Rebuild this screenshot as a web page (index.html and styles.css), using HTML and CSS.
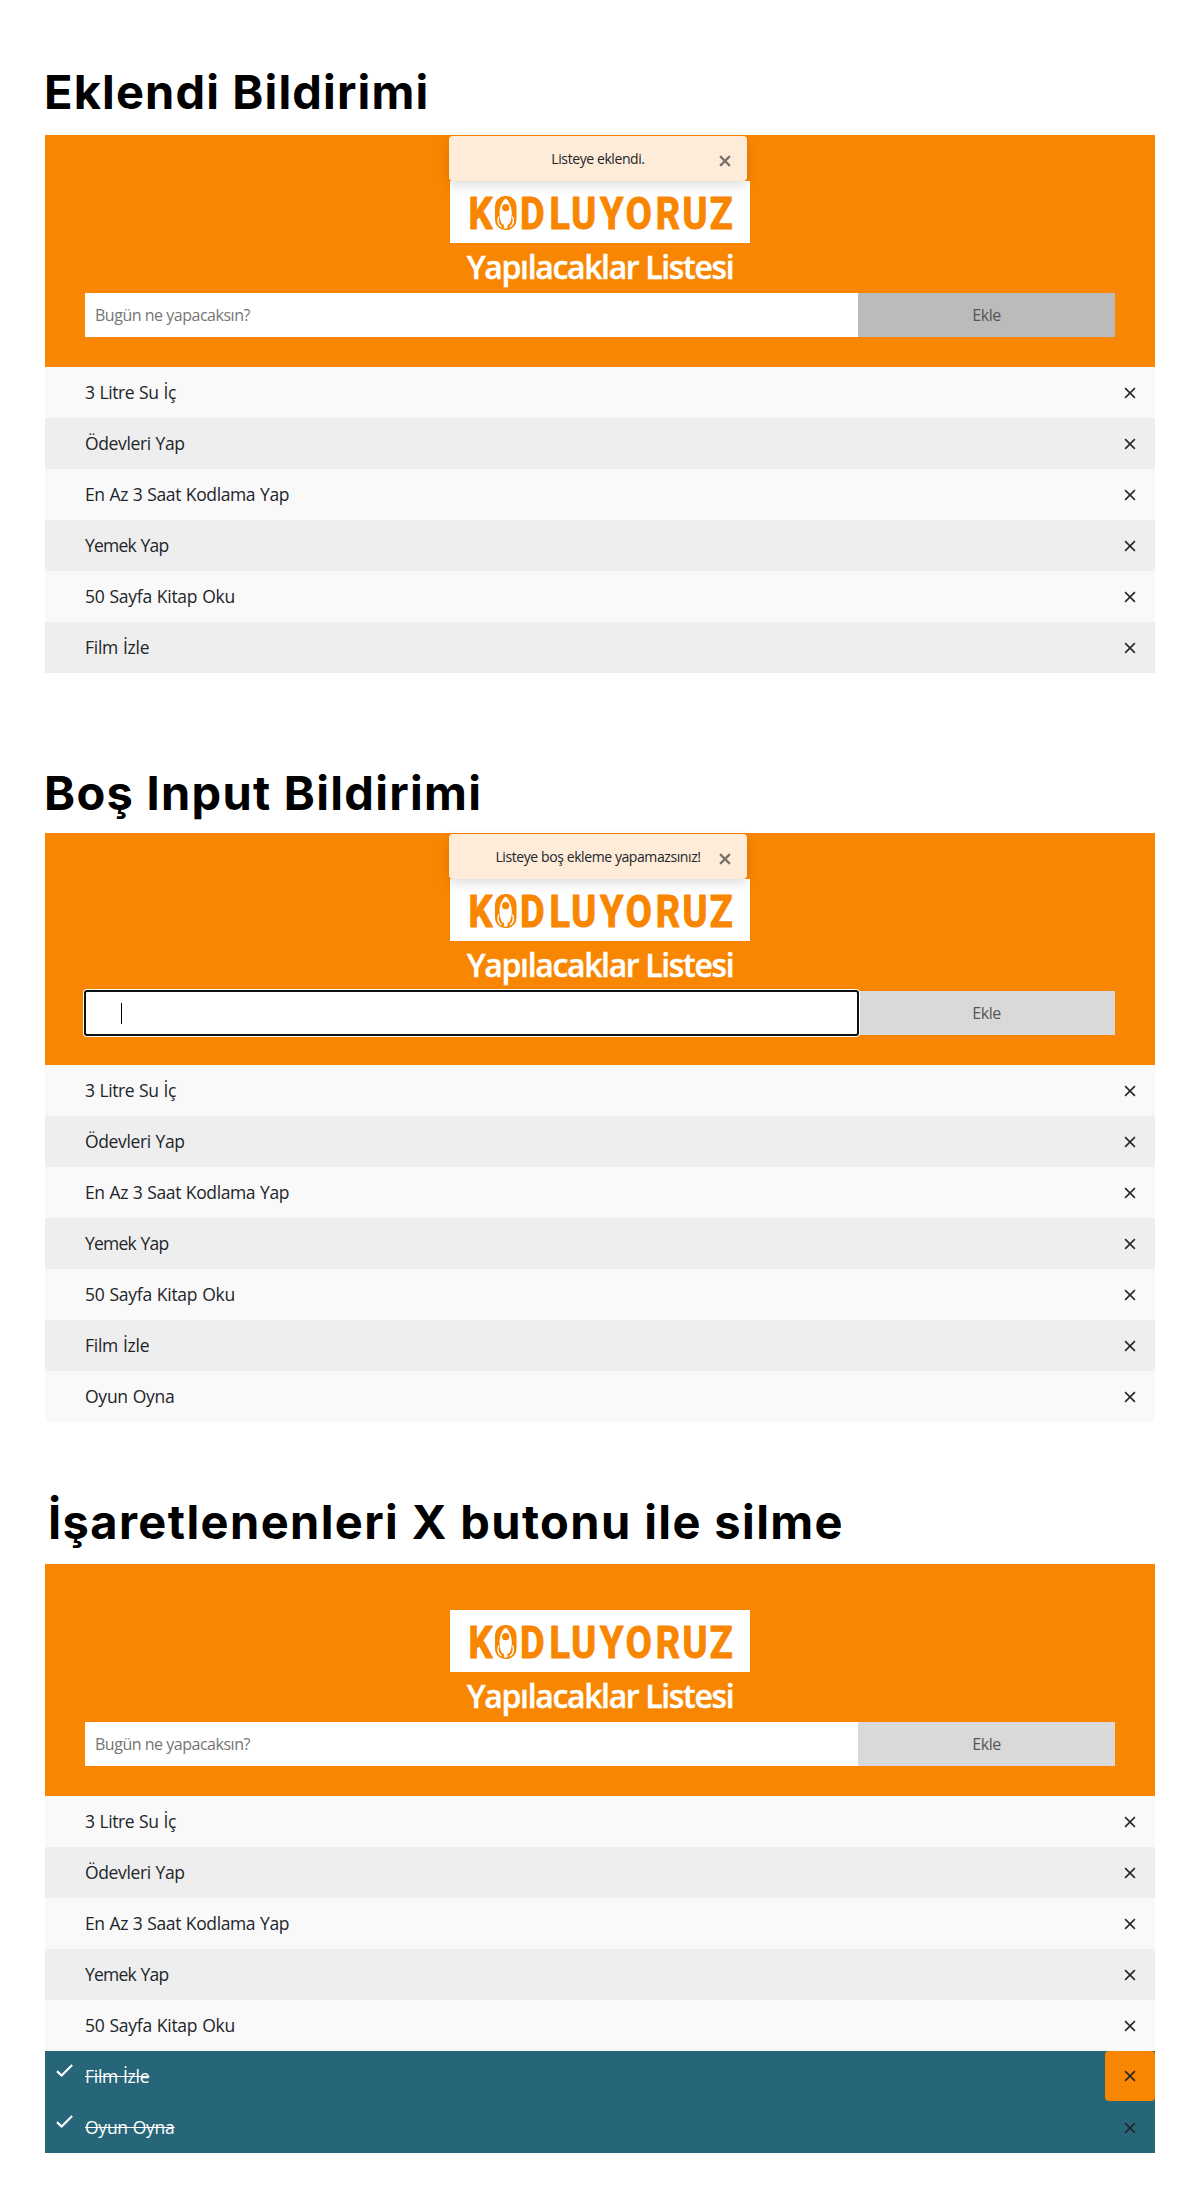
FILE: index.html
```
<!DOCTYPE html>
<html lang="tr">
<head>
<meta charset="utf-8">
<title>Yapılacaklar Listesi</title>
<link rel="stylesheet" href="styles.css">
</head>
<body>
<svg width="0" height="0" class="defs" aria-hidden="true">
  <symbol id="cross" viewBox="0 0 12 12"><path d="M1.1 1.1 10.9 10.9M10.9 1.1 1.1 10.9"/></symbol>
  <symbol id="check" viewBox="0 0 16 12"><path d="M.9 6.6 5.3 10.7 15.2 .9"/></symbol>
  <symbol id="rocket" viewBox="0 0 300 62">
    <rect x="45" y="15" width="21.5" height="34" rx="10" fill="#f98600"/>
    <path d="M55.7 17.6C51.5 20.8 49.4 27 49.6 33c.1 4 .9 7.6 2.6 10.5h1.7v4h3.6v-4h1.7c1.7-2.9 2.5-6.5 2.6-10.5C62 27 59.9 20.8 55.7 17.6z" fill="#fff"/>
    <circle cx="55.7" cy="26.7" r="3.6" fill="#f98600"/>
    <path d="M49 35.5c-2 4.5-.8 8 2.4 10.5M62.4 35.5c2 4.5.8 8-2.4 10.5" fill="none" stroke="#fff" stroke-width="1.3"/>
  </symbol>
</svg>

<main class="page">
  <section class="demo">
    <h2 class="heading">Eklendi Bildirimi</h2>
    <div class="panel">
      <header class="top">
        <div class="toast"><span>Listeye eklendi.</span><svg class="toast-x"><use href="#cross"/></svg></div>
        <svg class="logo" viewBox="0 0 300 62"><text class="logo-text" transform="scale(.84 1)" y="48" x="36.4 98 130.6 159.2 192.6 224.8 259.5 291.5 323">KDLUYORUZ</text><use href="#rocket"/></svg>
        <h1 class="title">Yapılacaklar Listesi</h1>
        <div class="form"><div class="field">Bugün ne yapacaksın?</div><div class="add add-hover">Ekle</div></div>
      </header>
      <ul class="list">
        <li class="item"><span class="snug">3 Litre Su İç</span><b class="del"><svg><use href="#cross"/></svg></b></li>
        <li class="item"><span class="snug">Ödevleri Yap</span><b class="del"><svg><use href="#cross"/></svg></b></li>
        <li class="item"><span class="snug">En Az 3 Saat Kodlama Yap</span><b class="del"><svg><use href="#cross"/></svg></b></li>
        <li class="item"><span class="tight">Yemek Yap</span><b class="del"><svg><use href="#cross"/></svg></b></li>
        <li class="item"><span>50 Sayfa Kitap Oku</span><b class="del"><svg><use href="#cross"/></svg></b></li>
        <li class="item"><span>Film İzle</span><b class="del"><svg><use href="#cross"/></svg></b></li>
      </ul>
    </div>
  </section>

  <section class="demo demo-empty">
    <h2 class="heading">Boş Input Bildirimi</h2>
    <div class="panel">
      <header class="top">
        <div class="toast"><span>Listeye boş ekleme yapamazsınız!</span><svg class="toast-x"><use href="#cross"/></svg></div>
        <svg class="logo" viewBox="0 0 300 62"><text class="logo-text" transform="scale(.84 1)" y="48" x="36.4 98 130.6 159.2 192.6 224.8 259.5 291.5 323">KDLUYORUZ</text><use href="#rocket"/></svg>
        <h1 class="title">Yapılacaklar Listesi</h1>
        <div class="form"><div class="field field-focus"><i class="caret"></i></div><div class="add">Ekle</div></div>
      </header>
      <ul class="list">
        <li class="item"><span class="snug">3 Litre Su İç</span><b class="del"><svg><use href="#cross"/></svg></b></li>
        <li class="item"><span class="snug">Ödevleri Yap</span><b class="del"><svg><use href="#cross"/></svg></b></li>
        <li class="item"><span class="snug">En Az 3 Saat Kodlama Yap</span><b class="del"><svg><use href="#cross"/></svg></b></li>
        <li class="item"><span class="tight">Yemek Yap</span><b class="del"><svg><use href="#cross"/></svg></b></li>
        <li class="item"><span>50 Sayfa Kitap Oku</span><b class="del"><svg><use href="#cross"/></svg></b></li>
        <li class="item"><span>Film İzle</span><b class="del"><svg><use href="#cross"/></svg></b></li>
        <li class="item"><span>Oyun Oyna</span><b class="del"><svg><use href="#cross"/></svg></b></li>
      </ul>
    </div>
  </section>

  <section class="demo demo-delete">
    <h2 class="heading">İşaretlenenleri X butonu ile silme</h2>
    <div class="panel">
      <header class="top">
        <svg class="logo" viewBox="0 0 300 62"><text class="logo-text" transform="scale(.84 1)" y="48" x="36.4 98 130.6 159.2 192.6 224.8 259.5 291.5 323">KDLUYORUZ</text><use href="#rocket"/></svg>
        <h1 class="title">Yapılacaklar Listesi</h1>
        <div class="form"><div class="field">Bugün ne yapacaksın?</div><div class="add">Ekle</div></div>
      </header>
      <ul class="list">
        <li class="item"><span class="snug">3 Litre Su İç</span><b class="del"><svg><use href="#cross"/></svg></b></li>
        <li class="item"><span class="snug">Ödevleri Yap</span><b class="del"><svg><use href="#cross"/></svg></b></li>
        <li class="item"><span class="snug">En Az 3 Saat Kodlama Yap</span><b class="del"><svg><use href="#cross"/></svg></b></li>
        <li class="item"><span class="tight">Yemek Yap</span><b class="del"><svg><use href="#cross"/></svg></b></li>
        <li class="item"><span>50 Sayfa Kitap Oku</span><b class="del"><svg><use href="#cross"/></svg></b></li>
        <li class="item done"><svg class="tick"><use href="#check"/></svg><span>Film İzle</span><b class="del del-hover"><svg><use href="#cross"/></svg></b></li>
        <li class="item done"><svg class="tick"><use href="#check"/></svg><span>Oyun Oyna</span><b class="del"><svg><use href="#cross"/></svg></b></li>
      </ul>
    </div>
  </section>
</main>
</body>
</html>
```
FILE: styles.css
```
* { box-sizing: border-box; }

body {
  margin: 0;
  background: #fff;
  color: #212529;
  font-family: "Open Sans", "Noto Sans", sans-serif;
}

.defs { position: absolute; }

.page { padding: 62px 45px 47px; }

.heading {
  margin: 0 0 13px -1px;
  font: 700 47px/60px Inter, sans-serif;
  letter-spacing: 1.13px;
  color: #000;
}

.demo-empty { margin-top: 90px; }
.demo-empty .heading { margin-bottom: 10px; letter-spacing: 1.28px; }
.demo-delete { margin-top: 70px; }
.demo-delete .heading { margin-bottom: 12px; margin-left: 3px; letter-spacing: 1.39px; }

.top {
  position: relative;
  display: flex;
  flex-direction: column;
  align-items: center;
  height: 232px;
  padding: 46px 40px 30px;
  background: #f98600;
}

.logo {
  flex: none;
  width: 300px;
  height: 62px;
  background: #fff;
}

.logo-text {
  font: 700 45px Roboto, sans-serif;
  text-anchor: middle;
  fill: #f98600;
  stroke: #f98600;
  stroke-width: 1.2;
  stroke-linejoin: round;
}

.title {
  margin: 0 0 2px;
  font-size: 32px;
  font-weight: 600;
  line-height: 48px;
  letter-spacing: -1.36px;
  color: #fff;
  -webkit-text-stroke: .4px #fff;
}

.form {
  display: flex;
  width: 100%;
  height: 44px;
  font-size: 16px;
  line-height: 44px;
  letter-spacing: -.48px;
}

.field {
  display: flex;
  align-items: center;
  width: 773px;
  padding-left: 10px;
  background: #fff;
  color: #757575;
}

.field-focus {
  position: relative;
  border-radius: 2px;
  padding-left: 36px;
  outline: 2px solid #101010;
  outline-offset: -1px;
  box-shadow: 0 0 0 2px #fff;
}

.caret { width: 1px; height: 21px; background: #000; }

.add {
  flex: 1;
  background: #d9d9d9;
  color: #555;
  text-align: center;
}

.add-hover { background: #bbb; }

.toast {
  position: absolute;
  top: 1px;
  left: 404px;
  width: 298px;
  height: 45px;
  border-radius: 4px;
  background: #feecd9;
  box-shadow: 0 4px 12px rgba(0, 0, 0, .14);
  font-size: 14px;
  line-height: 45px;
  letter-spacing: -.41px;
  text-align: center;
}

.toast-x {
  position: absolute;
  top: 19px;
  right: 16px;
  width: 12px;
  height: 12px;
  fill: none;
  stroke: #7b736b;
  stroke-width: 2.3;
}

.list { margin: 0; padding: 0; list-style: none; }

.item {
  position: relative;
  display: flex;
  justify-content: space-between;
  height: 51px;
  padding-left: 40px;
  background: #f9f9f9;
  font-size: 17.5px;
  line-height: 51px;
  letter-spacing: -.25px;
  word-spacing: .6px;
}

.item:nth-child(even) { background: #eee; }
.snug { letter-spacing: -.37px; }
.tight { letter-spacing: -.76px; }

.del {
  display: flex;
  align-items: center;
  justify-content: center;
  width: 50px;
  height: 51px;
}

.del svg {
  width: 12px;
  height: 12px;
  fill: none;
  stroke: #212529;
  stroke-width: 1.5;
}

.item.done { background: #276678; color: #fff; }
.item.done span { text-decoration: line-through; text-decoration-thickness: 1px; }

.del-hover { height: 50px; border-radius: 4px; background: #f98600; }

.tick {
  position: absolute;
  top: 13px;
  left: 11px;
  width: 17px;
  height: 13px;
  fill: none;
  stroke: #fff;
  stroke-width: 2;
}
```
